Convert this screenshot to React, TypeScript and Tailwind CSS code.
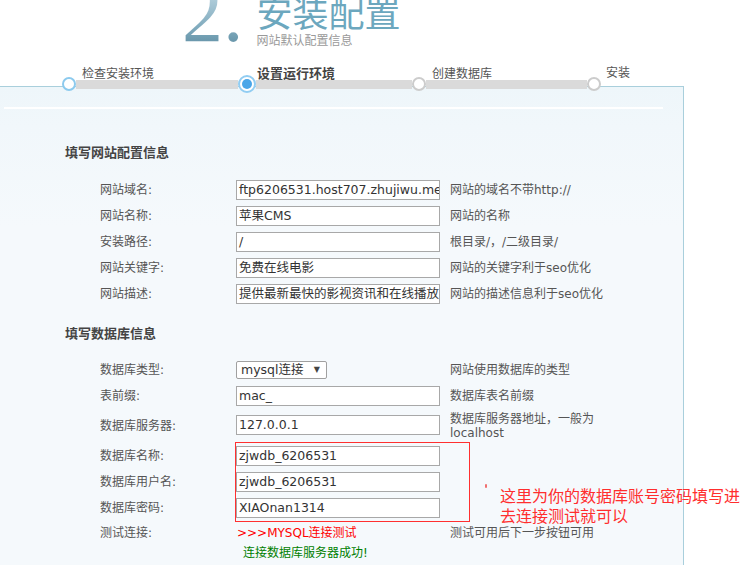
const font = "font-['DejaVu_Sans','Noto_Sans_CJK_SC',sans-serif]"

type Row = { label: string; value: string; hint: string }

const siteRows: Row[] = [
  { label: "网站域名:", value: "ftp6206531.host707.zhujiwu.me", hint: "网站的域名不带http://" },
  { label: "网站名称:", value: "苹果CMS", hint: "网站的名称" },
  { label: "安装路径:", value: "/", hint: "根目录/，/二级目录/" },
  { label: "网站关键字:", value: "免费在线电影", hint: "网站的关键字利于seo优化" },
  { label: "网站描述:", value: "提供最新最快的影视资讯和在线播放", hint: "网站的描述信息利于seo优化" },
]

const dbRows: Row[] = [
  { label: "数据库名称:", value: "zjwdb_6206531", hint: "" },
  { label: "数据库用户名:", value: "zjwdb_6206531", hint: "" },
  { label: "数据库密码:", value: "XIAOnan1314", hint: "" },
]

function TextBox({ value }: { value: string }) {
  return (
    <div className="h-[20px] w-[204px] shrink-0 overflow-hidden whitespace-nowrap border border-[#a8a8a8] bg-white px-[2px] text-[12.5px] leading-[18px] text-[#333]">
      {value}
    </div>
  )
}

function FormRow({ label, value, hint }: Row) {
  return (
    <div className="flex h-[26px] items-center">
      <div className="w-[236px] shrink-0 pl-[100px] text-[12px] text-[#555]">{label}</div>
      <TextBox value={value} />
      <div className="ml-[10px] whitespace-nowrap text-[12px] text-[#555]">{hint}</div>
    </div>
  )
}

function Step({ label, bold }: { label: string; bold?: boolean }) {
  return <span className={bold ? "text-[13px] font-bold text-[#444]" : "text-[12px] text-[#555]"}>{label}</span>
}

export default function App() {
  return (
    <div className={`min-h-[565px] overflow-hidden bg-white ${font}`}>
      {/* header */}
      <div className="flex h-[66px] pl-[182px]">
        <span className="-mt-[27px] bg-[linear-gradient(180deg,#b3cfdc_25%,#7ea9bc_60%,#4f8096_92%)] bg-clip-text font-['Liberation_Serif',serif] text-[82px] leading-[82px] text-transparent">
          2.
        </span>
        <div className="ml-[13px] flex flex-col">
          <span className="-mt-[7px] font-['Noto_Sans_CJK_SC',sans-serif] text-[36px] leading-[36px] text-[#6ca7be]">
            安装配置
          </span>
          <span className="mt-[5px] text-[12px] leading-[14px] text-[#9a9a9a]">网站默认配置信息</span>
        </div>
      </div>

      {/* step labels */}
      <div className="flex h-[14px] items-center leading-[14px]">
        <div className="w-[257px] shrink-0 pl-[82px]">
          <Step label="检查安装环境" />
        </div>
        <div className="w-[175px] shrink-0">
          <Step label="设置运行环境" bold />
        </div>
        <div className="w-[174px] shrink-0">
          <Step label="创建数据库" />
        </div>
        <Step label="安装" />
      </div>

      {/* panel */}
      <div className="mt-[6px] min-h-[479px] w-[684px] border-t border-r border-[#a9cfdc] bg-[linear-gradient(180deg,#eef6fa_0px,#f1f7fb_40px,#f5f9fc_140px)]">
        <div className="relative z-10 -mt-[12px] flex h-[18px] items-center pl-[62px]">
          <div className="h-[14px] w-[14px] shrink-0 rounded-full border-2 border-[#8ccaee] bg-white" />
          <div className="h-[9px] w-[162px] bg-[#dadada]" />
          <div className="flex h-[18px] w-[18px] shrink-0 items-center justify-center rounded-full border-2 border-[#92cdf2] bg-white">
            <div className="h-[10px] w-[10px] rounded-full bg-[#4aa6e8]" />
          </div>
          <div className="h-[9px] w-[156px] bg-[#dadada]" />
          <div className="h-[14px] w-[14px] shrink-0 rounded-full border-2 border-[#cccccc] bg-white" />
          <div className="h-[9px] w-[161px] bg-[#dadada]" />
          <div className="h-[14px] w-[14px] shrink-0 rounded-full border-2 border-[#cccccc] bg-white" />
        </div>

        <div className="mx-[4px] mt-[14px] h-[2px] w-[659px] bg-white" />

        <div className="mt-[37px] pl-[65px] text-[13px] font-bold leading-[13px] text-[#444]">填写网站配置信息</div>
        <div className="mt-[18px]">
          {siteRows.map((r) => (
            <FormRow key={r.label} {...r} />
          ))}
        </div>

        <div className="mt-[20px] pl-[65px] text-[13px] font-bold leading-[13px] text-[#444]">填写数据库信息</div>
        <div className="mt-[17px]">
          <div className="flex h-[26px] items-center">
            <div className="w-[236px] shrink-0 pl-[100px] text-[12px] text-[#555]">数据库类型:</div>
            <div className="flex h-[18px] w-[91px] shrink-0 items-center justify-between rounded-[2px] border border-[#a0a0a0] bg-white pr-[6px] pl-[4px] text-[12.5px] text-[#333]">
              <span>mysql连接</span>
              <span className="text-[8px] text-[#444]">▼</span>
            </div>
            <div className="ml-[123px] text-[12px] text-[#555]">网站使用数据库的类型</div>
          </div>
          <FormRow label="表前缀:" value="mac_" hint="数据库表名前缀" />
          <div className="flex h-[34px] items-center">
            <div className="w-[236px] shrink-0 pl-[100px] text-[12px] text-[#555]">数据库服务器:</div>
            <div className="mb-[3px]">
              <TextBox value="127.0.0.1" />
            </div>
            <div className="ml-[10px] text-[12px] leading-[14px] text-[#555]">
              数据库服务器地址，一般为
              <br />
              localhost
            </div>
          </div>

          <div className="relative">
            {dbRows.map((r) => (
              <FormRow key={r.label} {...r} />
            ))}
            <div className="pointer-events-none absolute top-[-1px] left-[235px] h-[80px] w-[235px] border border-[#ff3030]" />
            <div className="absolute top-[41px] left-[485px] h-[4px] w-[2px] rounded-full bg-[#f07070]" />
            <div className="absolute top-[42px] left-[500px] whitespace-nowrap font-['Noto_Sans_CJK_SC',sans-serif] text-[16px] leading-[20px] text-[#ff2e2e]">
              这里为你的数据库账号密码填写进
              <br />
              去连接测试就可以
            </div>
          </div>

          <div className="flex h-[24px] items-center">
            <div className="w-[237px] shrink-0 pl-[100px] text-[12px] text-[#555]">测试连接:</div>
            <div className="w-[213px] shrink-0 text-[12px] text-[#ff0000]">&gt;&gt;&gt;MYSQL连接测试</div>
            <div className="text-[12px] text-[#555]">测试可用后下一步按钮可用</div>
          </div>
          <div className="flex h-[16px] items-center pl-[243px] text-[12px] text-[#008000]">连接数据库服务器成功!</div>
        </div>
      </div>
    </div>
  )
}
